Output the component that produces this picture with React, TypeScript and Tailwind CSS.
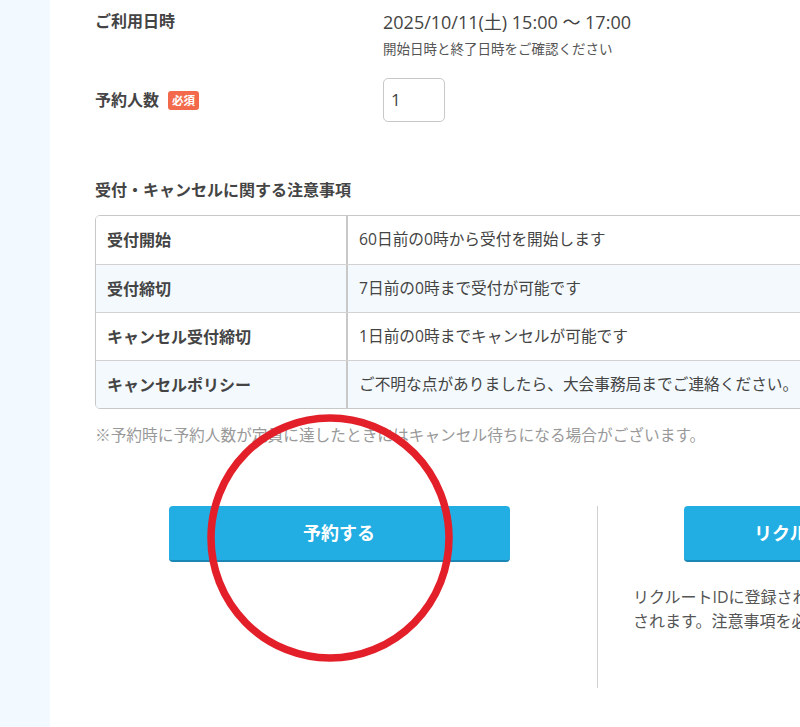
import React from 'react';

const rules = [
  { label: '受付開始', text: '60日前の0時から受付を開始します' },
  { label: '受付締切', text: '7日前の0時まで受付が可能です' },
  { label: 'キャンセル受付締切', text: '1日前の0時までキャンセルが可能です' },
  { label: 'キャンセルポリシー', text: 'ご不明な点がありましたら、大会事務局までご連絡ください。' },
];

const font = { fontFamily: '"Open Sans", "Noto Sans CJK JP", sans-serif' };

export default function App() {
  return (
    <div className="relative flex w-[800px] h-[727px] overflow-hidden bg-white text-[#333]" style={font}>
      <div className="w-[50px] shrink-0 bg-[#f3faff]" />
      <div className="flex-1 pl-[45px] pt-[9px] min-w-[1000px]">
        {/* form rows */}
        <div className="flex">
          <div className="w-[288px] shrink-0 text-[16px] font-bold leading-[24px] text-[#444]">ご利用日時</div>
          <div>
            <div className="text-[18px] leading-[26px] text-[#444]">2025/10/11(土) 15:00 ～ 17:00</div>
            <div className="mt-[4px] text-[13.5px] leading-[20px] text-[#555]">開始日時と終了日時をご確認ください</div>
          </div>
        </div>
        <div className="flex items-center mt-[19px]">
          <div className="w-[288px] shrink-0 flex items-center gap-[9px]">
            <span className="text-[16px] font-bold text-[#444]">予約人数</span>
            <span className="bg-[#f26a4b] text-white text-[11.5px] font-bold leading-[19px] h-[19px] rounded-[3px] px-[4px]">必須</span>
          </div>
          <div className="w-[62px] h-[44px] border border-[#c8c8c8] rounded-[5px] flex items-center pl-[7px] text-[17px] text-[#444]">1</div>
        </div>

        <h3 className="mt-[57px] text-[16px] font-bold leading-[22px] text-[#444]">受付・キャンセルに関する注意事項</h3>

        <div className="mt-[14px] border border-[#c8c8c8] rounded-[5px] overflow-hidden w-[800px]">
          {rules.map((r, i) => (
            <div
              key={r.label}
              className={`flex h-[48px] ${i > 0 ? 'border-t border-[#d2d2d2]' : ''} ${i % 2 === 1 ? 'bg-[#f3f9fd]' : 'bg-white'}`}
            >
              <div className="w-[252px] shrink-0 flex items-center pl-[11px] border-r-2 border-[#c8c8c8] text-[16px] font-bold text-[#444]">{r.label}</div>
              <div className="flex items-center pl-[11px] text-[15.7px] text-[#444] whitespace-nowrap">{r.text}</div>
            </div>
          ))}
        </div>

        <p className="mt-[15px] text-[15.7px] leading-[22px] text-[#999] whitespace-nowrap">※予約時に予約人数が定員に達したときにはキャンセル待ちになる場合がございます。</p>

        <div className="flex mt-[60px]">
          <div className="w-[502px] shrink-0 flex justify-center">
            <button className="w-[341px] h-[56px] ml-[-14px] rounded-[4px] bg-[#22ade3] border-b-2 border-[#1a87b4] text-white text-[18px] font-bold">予約する</button>
          </div>
          <div className="h-[182px] border-l border-[#d0d0d0] pl-[35px]">
            <button className="ml-[51px] w-[341px] h-[56px] rounded-[4px] bg-[#22ade3] border-b-2 border-[#1a87b4] text-white text-[18px] font-bold text-left pl-[70px] whitespace-nowrap">リクルートIDで予約する</button>
            <p className="mt-[23px] text-[16px] leading-[24px] text-[#555] w-[460px]">
              リクルートIDに登録されている情報が予約者情報として登録<br />されます。注意事項を必ずご確認ください。
            </p>
          </div>
        </div>
      </div>

      <svg className="absolute left-0 top-0 pointer-events-none" width="800" height="727">
        <ellipse cx="330" cy="538" rx="119" ry="120" fill="none" stroke="#e3202a" strokeWidth="7.5" />
      </svg>
    </div>
  );
}
